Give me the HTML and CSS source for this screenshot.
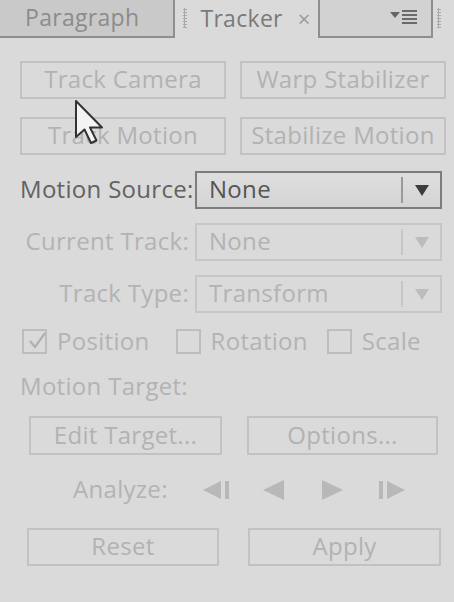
FILE: index.html
```html
<!DOCTYPE html>
<html>
<head>
<meta charset="utf-8">
<link rel="stylesheet" href="styles.css">
</head>
<body>
<div class="panel">
  <div class="tabs">
    <div class="tab tab-off">Paragraph</div>
    <div class="tab tab-on">
      <span class="grip"></span>
      <span class="tab-title">Tracker</span>
      <span class="tab-close">×</span>
    </div>
    <div class="tab-menu">
      <span class="menu-arrow"></span>
      <span class="menu-lines"><i></i><i></i><i></i><i></i></span>
    </div>
    <div class="tab-end"><span class="grip"></span></div>
  </div>

  <div class="content">
    <div class="btn-grid top">
      <div class="btn">Track Camera</div>
      <div class="btn">Warp Stabilizer</div>
      <div class="btn">Track Motion</div>
      <div class="btn">Stabilize Motion</div>
    </div>

    <div class="field active">
      <div class="label">Motion Source:</div>
      <div class="select"><span class="val">None</span><span class="sep"></span><span class="arrow"></span></div>
    </div>
    <div class="field">
      <div class="label">Current Track:</div>
      <div class="select"><span class="val">None</span><span class="sep"></span><span class="arrow"></span></div>
    </div>
    <div class="field">
      <div class="label">Track Type:</div>
      <div class="select"><span class="val">Transform</span><span class="sep"></span><span class="arrow"></span></div>
    </div>

    <div class="checks">
      <div class="check c1"><span class="box"><svg width="24" height="24" viewBox="0 0 24 24"><path d="M5 11 L10 17 L20 3" fill="none" stroke="#b0b0b0" stroke-width="2.2"/></svg></span>Position</div>
      <div class="check c2"><span class="box"></span>Rotation</div>
      <div class="check c3"><span class="box"></span>Scale</div>
    </div>

    <div class="section">Motion Target:</div>

    <div class="btn-grid mid">
      <div class="btn">Edit Target...</div>
      <div class="btn">Options...</div>
    </div>

    <div class="analyze">
      <span class="an-label">Analyze:</span>
      <span class="ctl k1"><svg width="28" height="22" viewBox="0 0 28 22"><path d="M0 11 L18 2 L18 20 Z" fill="#b8b8b8"/><rect x="22" y="2" width="4" height="18" fill="#b8b8b8"/></svg></span>
      <span class="ctl k2"><svg width="24" height="22" viewBox="0 0 24 22"><path d="M1 11 L22 1 L22 21 Z" fill="#b8b8b8"/></svg></span>
      <span class="ctl k3"><svg width="24" height="22" viewBox="0 0 24 22"><path d="M2 1 L23 11 L2 21 Z" fill="#b8b8b8"/></svg></span>
      <span class="ctl k4"><svg width="28" height="22" viewBox="0 0 28 22"><rect x="1" y="2" width="4" height="18" fill="#b8b8b8"/><path d="M9 2 L27 11 L9 20 Z" fill="#b8b8b8"/></svg></span>
    </div>

    <div class="btn-grid bottom">
      <div class="btn">Reset</div>
      <div class="btn">Apply</div>
    </div>
  </div>

  <svg class="cursor" width="34" height="48" viewBox="0 0 34 48"><path d="M2 2 L2 38 L10.5 30.5 L17 44 L22.5 41.5 L16 28.5 L28 28.5 Z" fill="#f4f4f4" stroke="#333" stroke-width="2" stroke-linejoin="round"/></svg>
</div>
</body>
</html>
```

FILE: styles.css
```css
html, body {
  margin: 0;
  padding: 0;
}
body {
  width: 454px;
  height: 602px;
  background: #dadada;
  font-family: "Open Sans", "DejaVu Sans", sans-serif;
  letter-spacing: 0.3px;
  overflow: hidden;
}
.panel {
  position: relative;
  width: 454px;
  height: 602px;
  background: #dadada;
}
.tabs {
  display: flex;
  height: 38px;
  box-sizing: border-box;
}
.tab {
  font-size: 23px;
  line-height: 30px;
  display: flex;
  align-items: center;
  box-sizing: border-box;
}
.tab-off {
  width: 177px;
  background: #c9c9c9;
  color: #8c8c8c;
  border-right: 2px solid #8e8e8e;
  border-bottom: 2px solid #8e8e8e;
  padding-left: 25px;
  padding-bottom: 2px;
}
.tab-on {
  width: 144px;
  color: #7a7a7a;
  padding-left: 8px;
  padding-bottom: 2px;
}
.grip {
  width: 4px;
  height: 20px;
  background-image: radial-gradient(circle, #a8a8a8 1px, transparent 1.2px);
  background-size: 3px 3px;
  margin-right: 13px;
}
.tab-title {
  margin-right: 15px;
}
.tab-close {
  font-size: 22px;
  color: #9a9a9a;
}
.tab-menu {
  width: 116px;
  box-sizing: border-box;
  border-left: 2px solid #8e8e8e;
  border-right: 2px solid #8e8e8e;
  border-bottom: 2px solid #8e8e8e;
  background: #d2d2d2;
  display: flex;
  align-items: center;
  justify-content: flex-end;
  padding-right: 14px;
  padding-bottom: 2px;
}
.menu-arrow {
  width: 0;
  height: 0;
  border-left: 5px solid transparent;
  border-right: 5px solid transparent;
  border-top: 6px solid #666;
  margin-right: 2px;
  margin-top: -4px;
}
.menu-lines {
  display: flex;
  flex-direction: column;
  gap: 2px;
}
.menu-lines i {
  display: block;
  width: 15px;
  height: 2px;
  background: #6a6a6a;
}
.tab-end {
  flex: 1;
  display: flex;
  align-items: center;
  padding-left: 4px;
  padding-bottom: 2px;
}
.content {
  padding: 23px 9px 0 20px;
}
.btn-grid {
  display: grid;
  grid-template-columns: 206px 206px;
  column-gap: 14px;
  row-gap: 18px;
}
.btn {
  height: 38px;
  box-sizing: border-box;
  border: 2px solid #c2c2c2;
  color: #b2b2b2;
  font-size: 24px;
  line-height: 30px;
  display: flex;
  align-items: center;
  justify-content: center;
  padding-bottom: 2px;
}
.field {
  display: flex;
  align-items: center;
  height: 38px;
  margin-top: 16px;
}
.field + .field {
  margin-top: 14px;
}
.label {
  width: 169px;
  text-align: right;
  font-size: 24px;
  line-height: 30px;
  color: #b3b3b3;
  padding-right: 6px;
  padding-bottom: 2px;
  white-space: nowrap;
}
.field.active .label {
  color: #626262;
}
.select {
  width: 247px;
  height: 38px;
  box-sizing: border-box;
  border: 2px solid #c6c6c6;
  display: flex;
  align-items: center;
  font-size: 24px;
  line-height: 30px;
  color: #b3b3b3;
}
.field.active .select {
  border-color: #7d7d7d;
  background: linear-gradient(#dedede, #d4d4d4);
  color: #555;
}
.val {
  flex: 1;
  padding-left: 12px;
  padding-bottom: 2px;
}
.sep {
  width: 2px;
  height: 26px;
  background: #c6c6c6;
}
.field.active .sep {
  background: #9a9a9a;
}
.arrow {
  width: 0;
  height: 0;
  border-left: 7px solid transparent;
  border-right: 7px solid transparent;
  border-top: 11px solid #bcbcbc;
  margin: 0 11px 0 12px;
}
.field.active .arrow {
  border-top-color: #3c3c3c;
}
.checks {
  display: flex;
  align-items: center;
  margin-top: 13px;
  padding-left: 2px;
  height: 30px;
  font-size: 24px;
  line-height: 30px;
  color: #b3b3b3;
}
.check {
  display: flex;
  align-items: center;
  white-space: nowrap;
}
.c1 { margin-right: 26px; }
.c2 { margin-right: 19px; }
.box {
  width: 25px;
  height: 25px;
  box-sizing: border-box;
  border: 2px solid #bdbdbd;
  margin-right: 10px;
  position: relative;
  flex: none;
}
.box svg {
  position: absolute;
  left: 1px;
  top: -1px;
}
.section {
  margin-top: 15px;
  font-size: 24px;
  line-height: 30px;
  color: #b3b3b3;
}
.btn-grid.mid {
  margin-top: 15px;
  padding-left: 9px;
  grid-template-columns: 193px 191px;
  column-gap: 25px;
}
.btn-grid.mid .btn {
  height: 39px;
}
.analyze {
  display: flex;
  align-items: center;
  height: 30px;
  margin-top: 20px;
  padding-left: 53px;
  font-size: 24px;
  line-height: 30px;
  color: #b3b3b3;
}
.an-label {
  width: 130px;
  padding-bottom: 2px;
}
.ctl { display: flex; }
.k1 { margin-right: 31px; }
.k2 { margin-right: 34px; }
.k3 { margin-right: 34px; }
.btn-grid.bottom {
  margin-top: 23px;
  padding-left: 7px;
  grid-template-columns: 192px 193px;
  column-gap: 29px;
}
.cursor {
  position: absolute;
  left: 74px;
  top: 99px;
}
```
